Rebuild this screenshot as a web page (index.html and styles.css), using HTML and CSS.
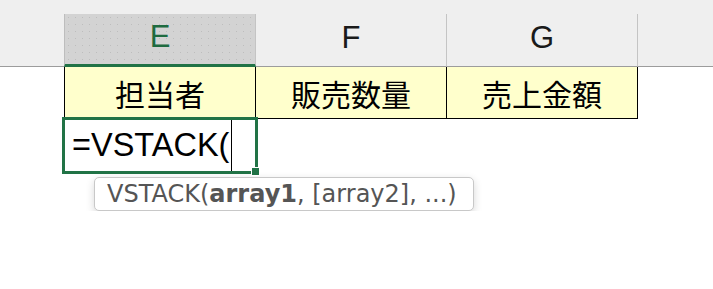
FILE: index.html
```html
<!DOCTYPE html>
<html lang="ja">
  <head>
    <meta charset="UTF-8" />
    <title>VSTACK</title>
    <link rel="stylesheet" href="styles.css">
  </head>

  <body>
    <div class="sheet">
      <div class="col-headers">
        <div class="corner"></div>
        <div class="col-head selected">E</div>
        <div class="col-head">F</div>
        <div class="col-head">G</div>
        <div class="col-rest"></div>
      </div>

      <div class="row">
        <div class="blank"></div>
        <div class="cell title first">担当者</div>
        <div class="cell title">販売数量</div>
        <div class="cell title">売上金額</div>
        <div class="blank"></div>
      </div>

      <div class="row edit-row">
        <div class="blank"></div>
        <div class="cell active">=VSTACK(<span class="caret"></span></div>
        <div class="blank"></div>
      </div>

      <div class="tip">VSTACK(<b>array1</b>, [array2], ...)</div>
    </div>
  </body>
</html>
```

FILE: styles.css
```css
* {
  margin: 0;
  padding: 0;
  box-sizing: border-box;
}

body {
  background: #ffffff;
  font-family: "Liberation Sans", "Noto Sans CJK JP", sans-serif;
  color: #000000;
}

.col-headers {
  display: grid;
  grid-template-columns: 64px 192px 191px 191px 1fr;
  height: 67px;
  padding-top: 14px;
  background-color: #efefef;
}

.corner,
.col-rest,
.col-head {
  border-bottom: 1px solid #9c9c9c;
}

.col-head {
  display: flex;
  justify-content: center;
  align-items: center;
  padding-bottom: 4px;
  font-size: 31px;
  color: #1a1a1a;
  border-right: 1px solid #c4c4c4;
}

.col-head.selected {
  color: #1e6b40;
  background-color: #d3d3d3;
  background-image: radial-gradient(#bdbdbd 0.6px, transparent 0.8px);
  background-size: 7px 7px;
  border-left: 1px solid #bdbdbd;
  border-bottom: 3px solid #217346;
}

.row {
  display: grid;
  grid-template-columns: 64px 192px 191px 191px 1fr;
  height: 52px;
}

.edit-row {
  height: 53px;
}

.cell {
  display: flex;
  align-items: center;
  font-size: 30px;
}

.title {
  justify-content: center;
  background-color: #ffffcc;
  border-right: 1px solid #000000;
  border-bottom: 1px solid #000000;
}

.title.first {
  border-left: 1px solid #000000;
}

.active {
  position: relative;
  font-size: 32.5px;
  border: 3px solid #217346;
  margin: -2px;
  padding-left: 7px;
}

.active::after {
  content: "";
  position: absolute;
  right: -5px;
  bottom: -5px;
  width: 7px;
  height: 7px;
  background: #217346;
  border: 1px solid #ffffff;
}

.caret {
  display: inline-block;
  width: 1px;
  height: 51px;
  margin-left: 2px;
  background: #000000;
  align-self: flex-end;
}

.tip {
  display: flex;
  align-items: center;
  width: 380px;
  height: 34px;
  margin: 5px 0 0 94px;
  padding-left: 12px;
  font-family: "DejaVu Sans", sans-serif;
  font-size: 24px;
  color: #555555;
  background: #ffffff;
  border: 1px solid #c8c8c8;
  border-radius: 5px;
  box-shadow: 0 3px 9px rgba(0, 0, 0, 0.16);
}

.tip b {
  font-weight: bold;
}
```
